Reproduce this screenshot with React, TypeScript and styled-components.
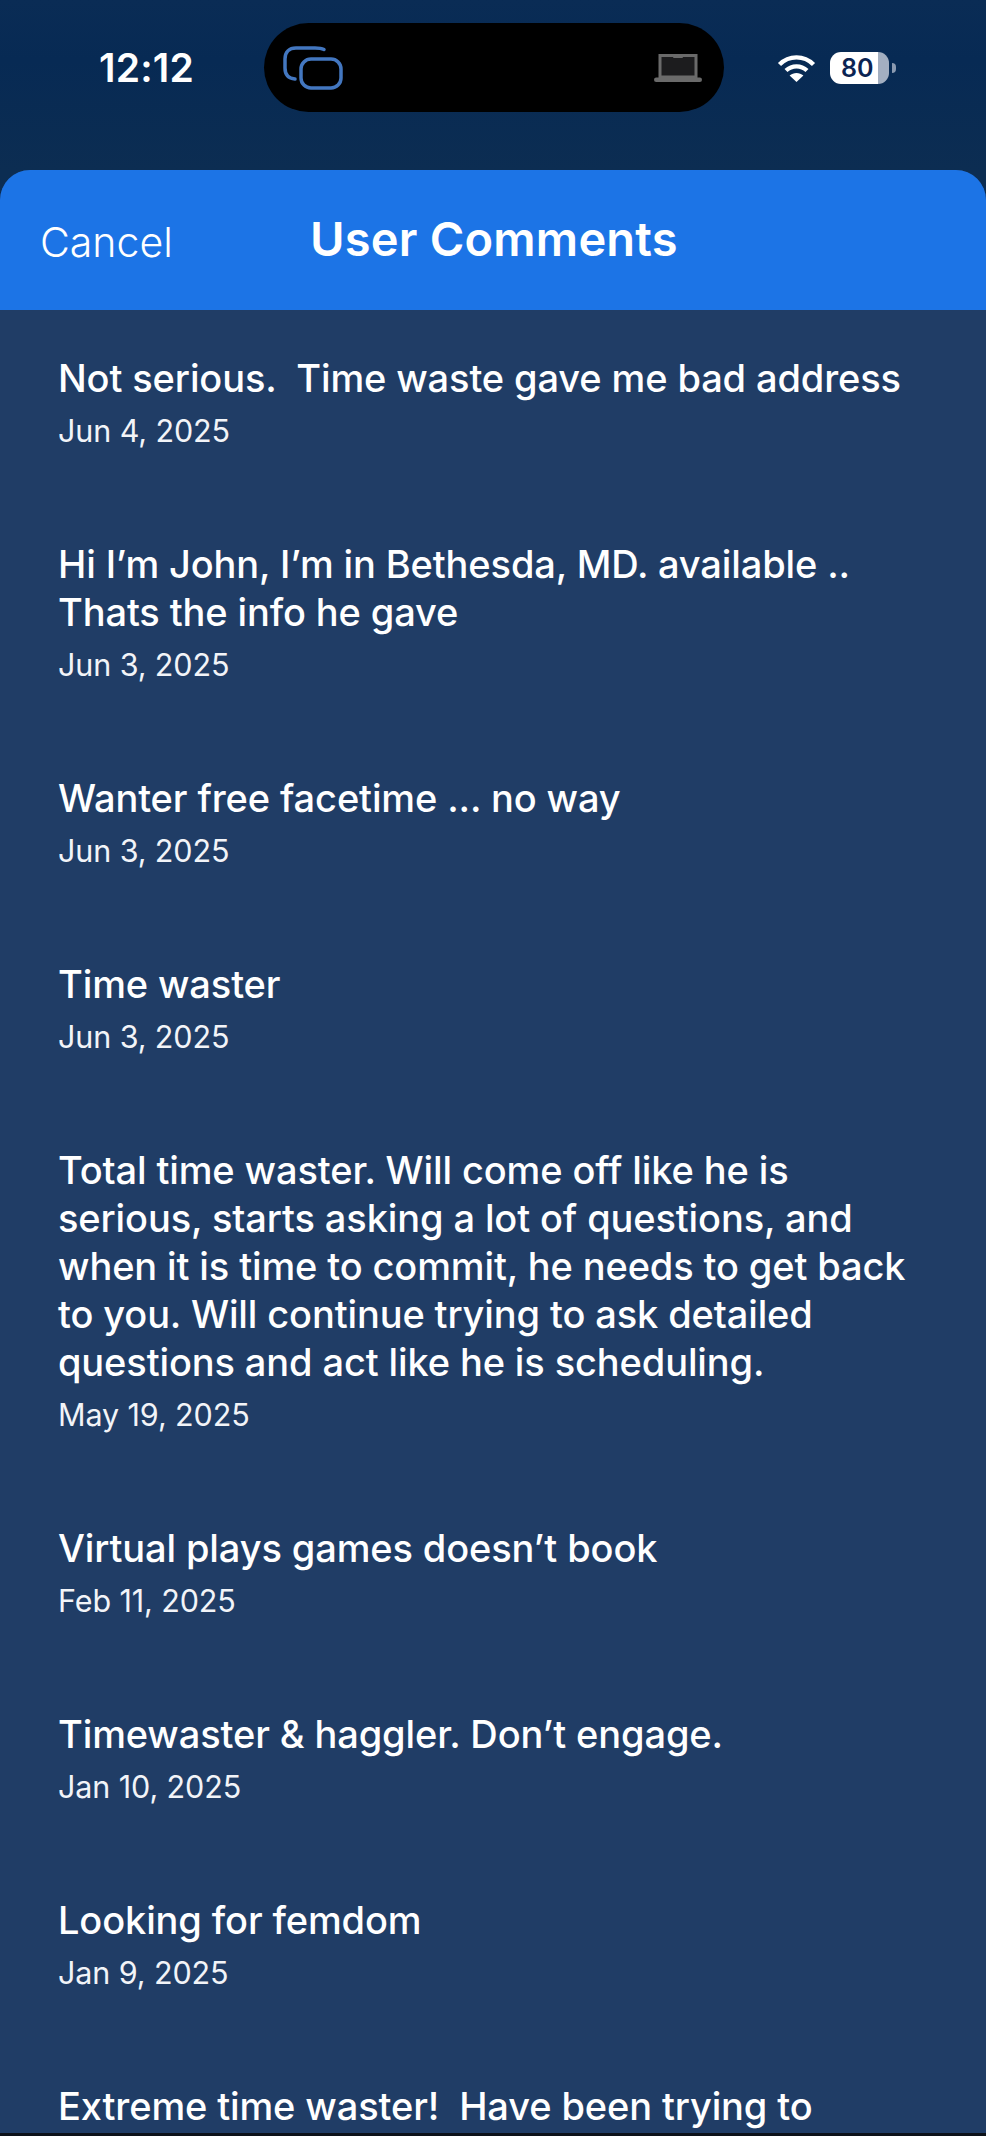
import React from "react";
import styled, { createGlobalStyle } from "styled-components";

const Global = createGlobalStyle`
  html, body {
    margin: 0;
    padding: 0;
    background: #0a0f18;
  }
`;

const Page = styled.div`
  width: 986px;
  height: 2136px;
  overflow: hidden;
  display: flex;
  flex-direction: column;
  font-family: Inter, "Liberation Sans", sans-serif;
  color: #fff;
  background: linear-gradient(180deg, #0a2c55 0%, #072a54 60px, #0c2d52 170px);
`;

const StatusBar = styled.div`
  flex: 0 0 170px;
  display: flex;
  align-items: flex-start;
  padding-top: 23px;
  box-sizing: border-box;
`;

const Time = styled.div`
  width: 264px;
  padding-left: 99px;
  box-sizing: border-box;
  margin-top: 23px;
  font-size: 39px;
  line-height: 44px;
  font-weight: 600;
  letter-spacing: 0.2px;
`;

const Island = styled.div`
  width: 460px;
  height: 89px;
  border-radius: 45px;
  background: #000;
  display: flex;
  align-items: center;
  justify-content: space-between;
  padding: 0 22px 0 19px;
  box-sizing: border-box;
`;

const Indicators = styled.div`
  display: flex;
  align-items: center;
  margin: 29px 0 0 53px;
`;

const Battery = styled.div`
  width: 59px;
  height: 32px;
  margin-left: 14px;
  border-radius: 11px;
  background: linear-gradient(90deg, #fff 0 48px, #a3afc1 48px);
  color: #0b2453;
  font-size: 25px;
  line-height: 32px;
  font-weight: 600;
  padding-left: 11px;
  box-sizing: border-box;
`;

const BatteryNub = styled.div`
  width: 4px;
  height: 10px;
  margin-left: 3px;
  border-radius: 0 4px 4px 0;
  background: #8b9ab0;
`;

const Sheet = styled.div`
  flex: 1;
  min-height: 0;
  display: flex;
  flex-direction: column;
  border-radius: 30px 30px 0 0;
  overflow: hidden;
  background: #203d66;
`;

const Header = styled.div`
  flex: 0 0 140px;
  display: flex;
  align-items: center;
  background: #1c74e6;
`;

const Cancel = styled.div`
  width: 310px;
  padding-left: 40px;
  box-sizing: border-box;
  font-size: 41px;
  line-height: 48px;
  font-weight: 300;
  letter-spacing: 0;
  margin-top: 3px;
`;

const Title = styled.div`
  font-size: 47px;
  line-height: 56px;
  font-weight: 600;
  letter-spacing: 0.2px;
  margin-top: -3px;
`;

const List = styled.div`
  flex: 1;
  min-height: 0;
  overflow: hidden;
  padding: 44px 0 0 58px;
  display: flex;
  flex-direction: column;
  gap: 85px;
`;

const Item = styled.div`
  display: flex;
  flex-direction: column;
  gap: 5px;
`;

const Comment = styled.div`
  font-size: 38px;
  line-height: 48px;
  font-weight: 500;
  letter-spacing: -0.12px;
  white-space: pre;
`;

const DateText = styled.div`
  font-size: 30.5px;
  line-height: 48px;
  font-weight: 400;
  letter-spacing: -0.1px;
  color: #f2f4f8;
`;

const BottomEdge = styled.div`
  flex: 0 0 3px;
  background: #0d1219;
`;

const comments = [
  { text: "Not serious.  Time waste gave me bad address", date: "Jun 4, 2025" },
  { text: "Hi I’m John, I’m in Bethesda, MD. available ..\nThats the info he gave", date: "Jun 3, 2025" },
  { text: "Wanter free facetime ... no way", date: "Jun 3, 2025" },
  { text: "Time waster", date: "Jun 3, 2025" },
  {
    text: "Total time waster. Will come off like he is\nserious, starts asking a lot of questions, and\nwhen it is time to commit, he needs to get back\nto you. Will continue trying to ask detailed\nquestions and act like he is scheduling.",
    date: "May 19, 2025",
  },
  { text: "Virtual plays games doesn’t book", date: "Feb 11, 2025" },
  { text: "Timewaster & haggler. Don’t engage.", date: "Jan 10, 2025" },
  { text: "Looking for femdom", date: "Jan 9, 2025" },
  { text: "Extreme time waster!  Have been trying to", date: "" },
];

const WindowsIcon = () => (
  <svg width="60" height="44" viewBox="0 0 60 44" fill="none" stroke="#4377c0" strokeWidth="3.5">
    <path d="M41 3.5 C38 2 36 2 32 2 H13 C6 2 2 6 2 13 V22 C2 29 6 32.5 12 33" strokeLinecap="round" />
    <rect x="18" y="13" width="40" height="29" rx="10" />
  </svg>
);

const LaptopIcon = () => (
  <svg width="48" height="28" viewBox="0 0 48 28">
    <path d="M6 1.5 H42 V23 H6 Z" fill="#1c1c1e" stroke="#6a6a6a" strokeWidth="3" />
    <rect x="19" y="1" width="10" height="3" rx="1" fill="#6a6a6a" />
    <rect x="0" y="23.5" width="48" height="4.5" rx="2.2" fill="#6a6a6a" />
  </svg>
);

const WifiIcon = () => (
  <svg width="39" height="28" viewBox="0 0 39 28" fill="none" stroke="#fff" strokeWidth="4.4">
    <path d="M2.5 10.5 C12 1 27 1 36.5 10.5" />
    <path d="M9 16.5 C15 11 24 11 30 16.5" />
    <path d="M19.5 28 L12.6 21.6 C16.5 18.2 22.5 18.2 26.4 21.6 Z" fill="#fff" stroke="none" />
  </svg>
);

export default function App() {
  return (
    <Page>
      <Global />
      <StatusBar>
        <Time>12:12</Time>
        <Island>
          <WindowsIcon />
          <LaptopIcon />
        </Island>
        <Indicators>
          <WifiIcon />
          <Battery>80</Battery>
          <BatteryNub />
        </Indicators>
      </StatusBar>
      <Sheet>
        <Header>
          <Cancel>Cancel</Cancel>
          <Title>User Comments</Title>
        </Header>
        <List>
          {comments.map((c, i) => (
            <Item key={i}>
              <Comment>{c.text}</Comment>
              {c.date && <DateText>{c.date}</DateText>}
            </Item>
          ))}
        </List>
        <BottomEdge />
      </Sheet>
    </Page>
  );
}
